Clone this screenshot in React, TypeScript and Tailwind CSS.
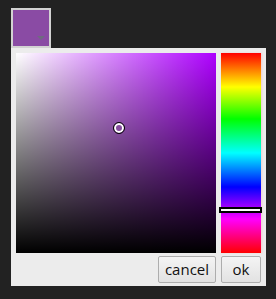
const HUE = 281

export default function App() {
  return (
    <div className="min-h-[299px] w-[276px] bg-[#222222] pt-2 pl-[11px]">
      <div className="relative h-10 w-10 border-2 border-[#d2d2d2] bg-[#8a4ba4]">
        <div className="absolute top-[26px] left-6 h-0 w-0 border-x-[4px] border-t-[4px] border-x-transparent border-t-[#6f6a80]" />
      </div>
      <div className="flex w-[255px] flex-col gap-[3px] bg-[#ececec] px-[5px] pt-[5px] pb-[3px]">
        <div className="flex gap-[5px]">
          <div
            className="relative h-[200px] w-[200px]"
            style={{ backgroundColor: `hsl(${HUE}, 100%, 50%)` }}
          >
            <div className="absolute inset-0 bg-gradient-to-r from-white to-transparent" />
            <div className="absolute inset-0 bg-gradient-to-t from-black to-transparent" />
            <div className="absolute top-[69px] left-[97px] h-3 w-3 rounded-full border border-black bg-[#864d9f] ring-0 shadow-[inset_0_0_0_2px_#fff]" />
          </div>
          <div className="relative h-[200px] w-10 bg-[linear-gradient(to_bottom,#ff0000_0%,#ffff00_17%,#00ff00_33%,#00ffff_50%,#0000ff_67%,#ff00ff_83%,#ff0000_100%)] shadow-[1px_0_2px_rgba(255,120,120,0.25)]">
            <div className="absolute top-[154px] -left-0.5 h-[6px] w-[43px] border-2 border-black bg-white" />
          </div>
        </div>
        <div className="flex justify-end gap-[5px] font-['Open_Sans',sans-serif] text-[15px] text-[#111]">
          <button className="h-[27px] w-[58px] rounded-[2px] border border-[#adadad] bg-gradient-to-b from-[#f4f4f4] to-[#e2e2e2] leading-none">
            cancel
          </button>
          <button className="h-[27px] w-10 rounded-[2px] border border-[#adadad] bg-gradient-to-b from-[#f4f4f4] to-[#e2e2e2] leading-none">
            ok
          </button>
        </div>
      </div>
    </div>
  )
}
